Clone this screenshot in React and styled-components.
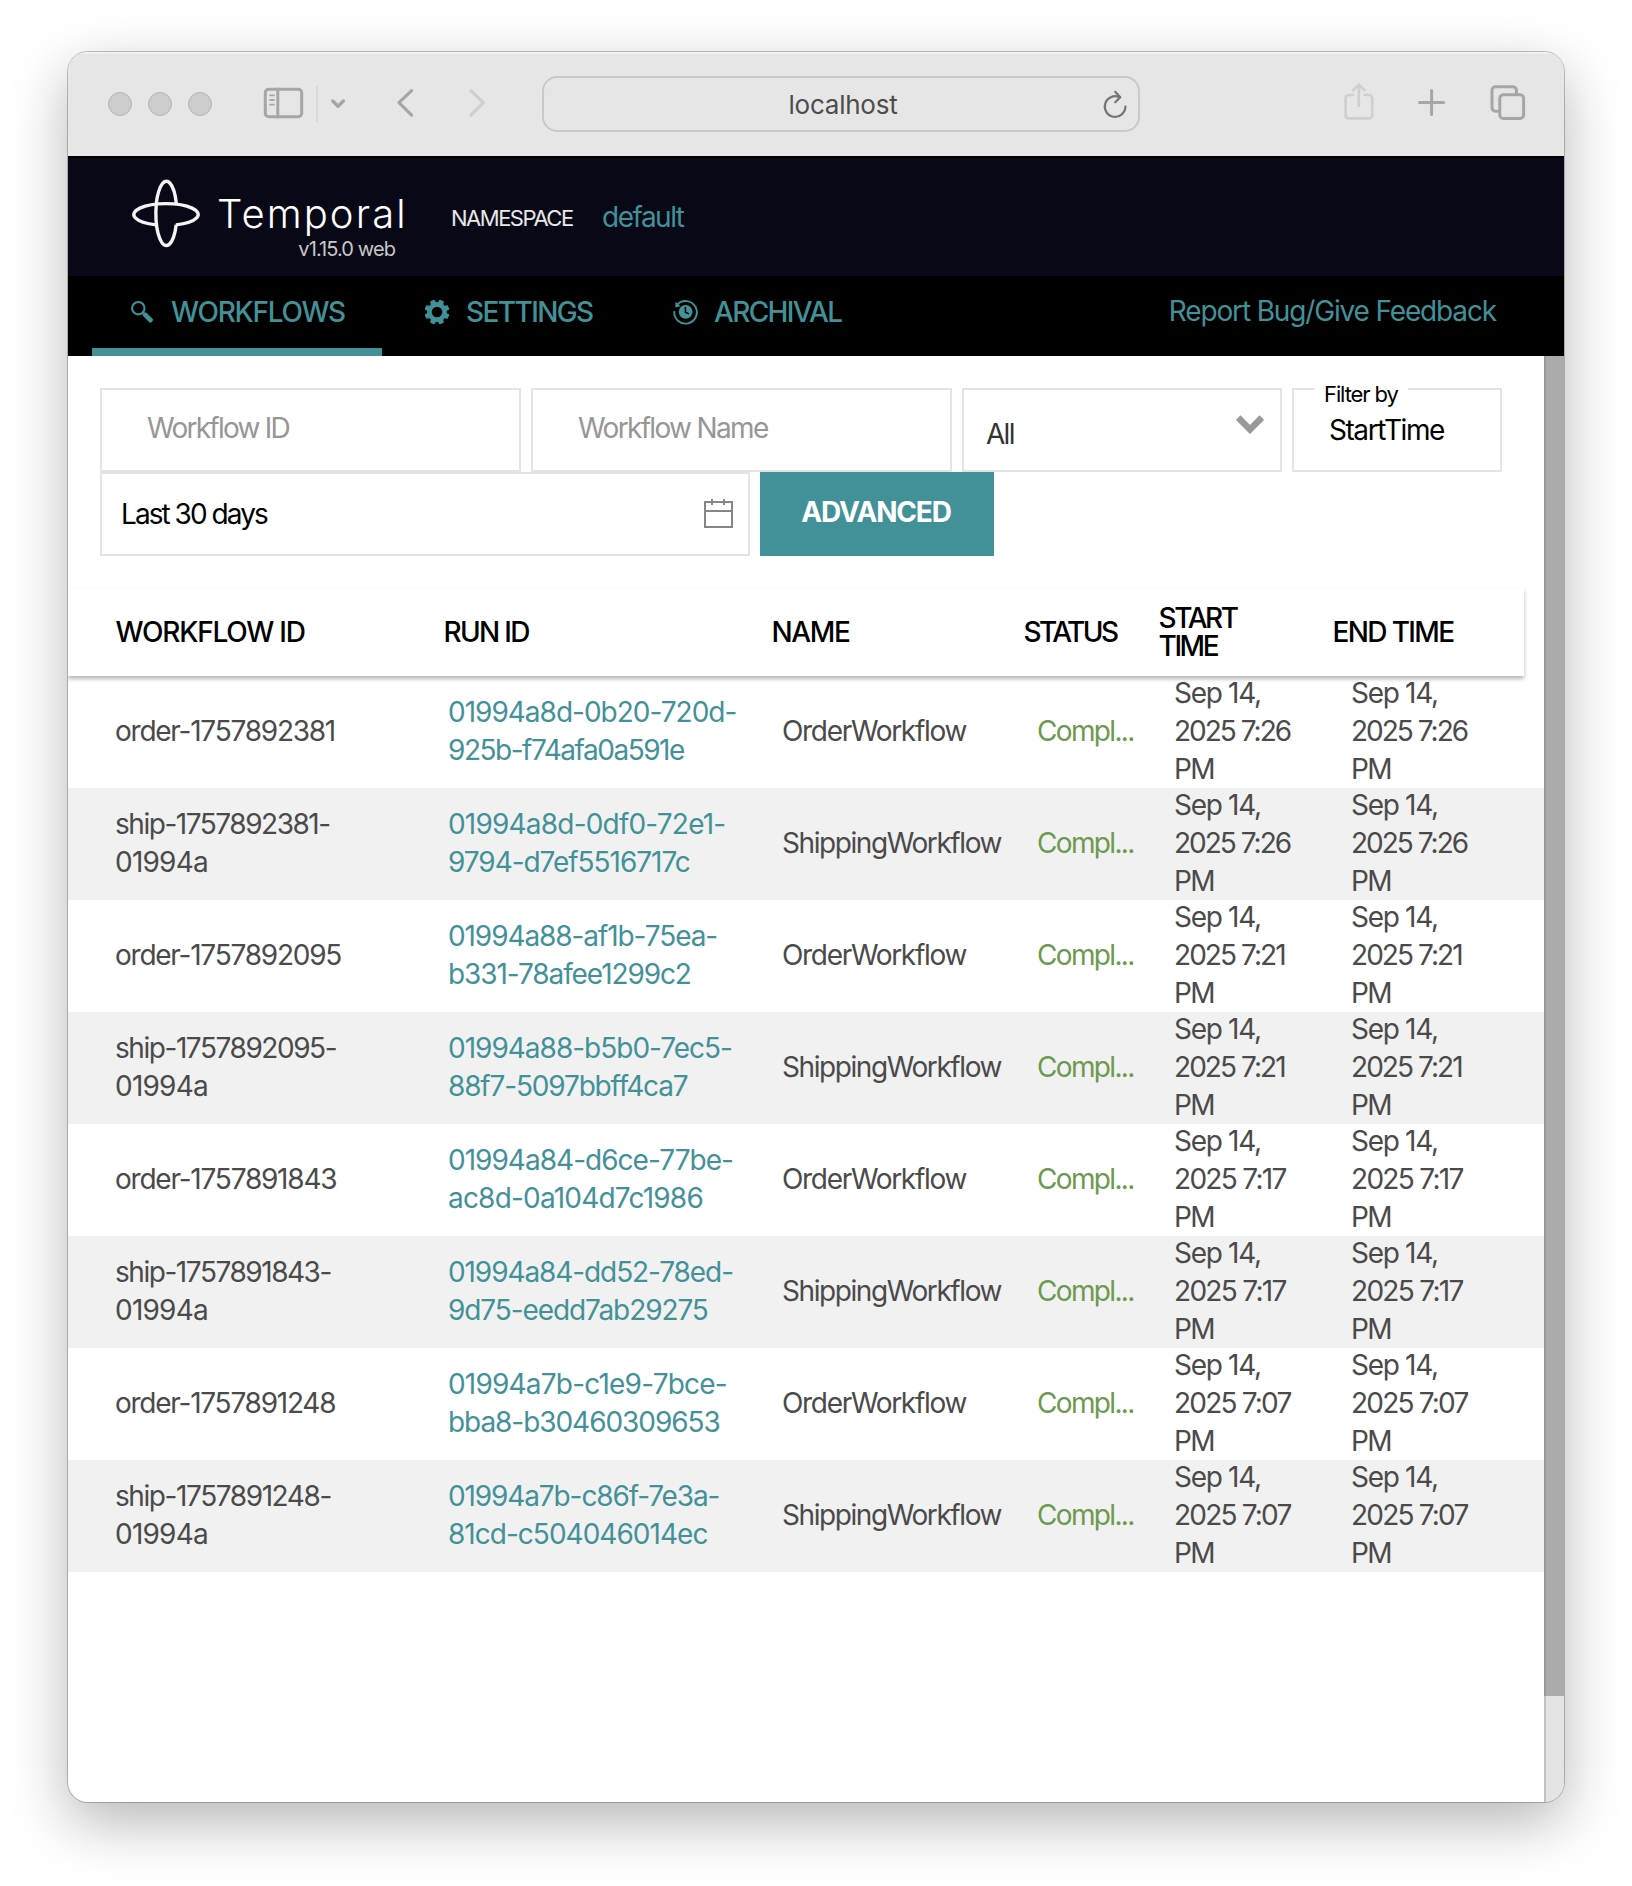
import React from 'react';
import styled, { createGlobalStyle } from 'styled-components';

const teal = '#439198';

const GlobalStyle = createGlobalStyle`
  * { box-sizing: border-box; }
  body { margin: 0; background: #fff; }
  svg { display: block; flex: none; }
`;

const Desktop = styled.div`
  width: 1632px;
  height: 1886px;
  padding: 52px 68px 84px;
  overflow: hidden;
  background: #fff;
  font-family: Inter, "Liberation Sans", sans-serif;
  font-size: 28px;
  line-height: 28px;
  white-space: nowrap;
`;

const Window = styled.div`
  display: flex;
  flex-direction: column;
  width: 1496px;
  height: 1750px;
  border-radius: 20px;
  overflow: hidden;
  background: #fff;
  box-shadow: 0 0 0 1px rgba(0, 0, 0, 0.23), 0 20px 58px rgba(0, 0, 0, 0.29);
`;

const Toolbar = styled.div`
  display: flex;
  align-items: center;
  flex: none;
  height: 104px;
  padding-left: 40px;
  background: #e6e6e6;
  box-shadow: inset 0 2px 0 #f1f1f1;
`;

const Lights = styled.div`
  display: flex;
  gap: 16px;
`;

const Light = styled.span`
  width: 24px;
  height: 24px;
  border: 1px solid #b4b4b4;
  border-radius: 50%;
  background: #cdcdcd;
`;

const ToolIcon = styled.svg`
  margin-left: ${(p) => p.$gap}px;
  fill: none;
  stroke: ${(p) => (p.$faded ? '#cfcfcf' : '#a6a6a6')};
  stroke-width: ${(p) => p.$stroke || 3};
  stroke-linecap: round;
  stroke-linejoin: round;
`;

const Divider = styled.span`
  width: 2px;
  height: 36px;
  margin-left: 11px;
  background: #d8d8d8;
`;

const AddressBar = styled.div`
  display: flex;
  align-items: center;
  width: 598px;
  height: 56px;
  margin-left: 54px;
  padding: 0 8px 0 42px;
  border: 2px solid #c9c9c9;
  border-radius: 15px;
`;

const Address = styled.span`
  flex: 1;
  padding-top: 1px;
  text-align: center;
  font-size: 26px;
  letter-spacing: -0.23px;
  color: #4c4c4c;
`;

const ReloadIcon = styled.svg`
  fill: none;
  stroke: #747474;
  stroke-width: 2.2;
  stroke-linecap: round;
  stroke-linejoin: round;
`;

const Header = styled.header`
  display: flex;
  flex: none;
  height: 120px;
  padding-left: 62px;
  border-top: 2px solid #000;
  background: #090817;
  color: #e8e8e8;
`;

const Logo = styled.svg`
  margin-top: 20px;
  fill: none;
  stroke: #f4f4f4;
  stroke-width: 3.4;
`;

const Brand = styled.div`
  width: 190px;
  margin: 36px 0 0 15px;
`;

const BrandName = styled.div`
  font-size: 40px;
  font-weight: 300;
  line-height: 40px;
  letter-spacing: 2.1px;
  color: #fff;
`;

const Version = styled.div`
  margin-top: 5px;
  padding-right: 12px;
  text-align: right;
  font-size: 20px;
  line-height: 20px;
  letter-spacing: -0.9px;
  color: #c8c8c8;
`;

const NamespaceLabel = styled.span`
  width: 151px;
  margin: 49px 0 0 44px;
  font-size: 22px;
  line-height: 22px;
  letter-spacing: -1.5px;
`;

const NamespaceName = styled.a`
  margin-top: 45px;
  letter-spacing: -1.5px;
  color: ${teal};
`;

const Nav = styled.nav`
  display: flex;
  flex: none;
  gap: 4px;
  height: 80px;
  padding-left: 24px;
  background: #000;
  color: ${teal};
`;

const Tab = styled.a`
  display: flex;
  align-items: center;
  gap: ${(p) => p.$gap || 16}px;
  width: ${(p) => p.$width}px;
  padding-left: 38px;
  border-bottom: 8px solid ${(p) => (p.$active ? teal : 'transparent')};
  font-weight: 500;
  letter-spacing: ${(p) => p.$tracking}px;
`;

const Feedback = styled.a`
  margin: 21px 68px 0 auto;
  letter-spacing: -1.15px;
`;

const Viewport = styled.div`
  display: flex;
  flex: 1;
`;

const Main = styled.main`
  width: 1476px;
`;

const Scrollbar = styled.div`
  width: 20px;
  border-left: 2px solid #c2c2c2;
  background: #e4e4e4;
`;

const Thumb = styled.div`
  height: 1340px;
  margin-left: -2px;
  border-left: 2px solid #999;
  background: #ababab;
`;

const Filters = styled.section`
  display: flex;
  flex-wrap: wrap;
  column-gap: 10px;
  padding: 32px 40px 0 32px;
`;

const Field = styled.div`
  position: relative;
  display: flex;
  align-items: center;
  justify-content: space-between;
  width: ${(p) => p.$width}px;
  height: 84px;
  padding: 0 ${(p) => p.$right || 0}px ${(p) => p.$lift || 0}px ${(p) => p.$left}px;
  border: 2px solid #e4e4e4;
  letter-spacing: ${(p) => p.$tracking}px;
  color: ${(p) => p.$color || '#000'};
`;

const SelectValue = styled.span`
  margin-top: 8px;
`;

const SelectArrow = styled.svg`
  margin-bottom: 11px;
  fill: none;
  stroke: #999;
  stroke-width: 6.4;
`;

const CalendarIcon = styled.svg`
  margin-bottom: 3px;
  fill: none;
  stroke: #868686;
  stroke-width: 2;
`;

const FieldLegend = styled.span`
  position: absolute;
  top: -7px;
  left: 21px;
  width: 93px;
  padding-left: 9px;
  background: #fff;
  font-size: 22px;
  line-height: 22px;
  letter-spacing: -1.1px;
`;

const AdvancedButton = styled.button`
  width: 234px;
  height: 84px;
  padding: 0 2px 4px 0;
  border: 0;
  background: ${teal};
  font: 700 28px/28px Inter, "Liberation Sans", sans-serif;
  letter-spacing: -1.19px;
  color: #fff;
`;

const TableHead = styled.div`
  position: relative;
  display: grid;
  grid-template-columns: 328px 328px 252px 135px 174px 1fr;
  align-items: center;
  width: 1456px;
  height: 88px;
  margin-top: 32px;
  padding-left: 47.5px;
  background: #fff;
  box-shadow: 0 3px 4px rgba(0, 0, 0, 0.28);
  font-weight: 500;
  color: #000;
`;

const HeadCell = styled.span`
  white-space: pre-line;
  letter-spacing: ${(p) => p.$tracking}px;
`;

const Row = styled.div`
  display: grid;
  grid-template-columns: 333px 334px 255px 137px 177px 1fr;
  grid-template-rows: 100%;
  align-items: center;
  height: 112px;
  padding: 0 0 3px 47px;
  background: ${(p) => (p.$shaded ? '#f1f1f1' : '#fff')};
  line-height: 38px;
  color: #4a4a4a;
`;

const Cell = styled.span`
  letter-spacing: ${(p) => p.$tracking || -1.4}px;
  color: ${(p) => p.$color || 'inherit'};
`;

const Line = styled.span`
  display: block;
  letter-spacing: ${(p) => p.$tracking}px;
`;

const rows = [
  { id: [['order-1757892381', -1.24]], run: [['01994a8d-0b20-720d-', -1.0], ['925b-f74afa0a591e', -1.48]], time: '7:26' },
  { id: [['ship-1757892381-', -1.47], ['01994a', -0.77]], run: [['01994a8d-0df0-72e1-', -0.8], ['9794-d7ef5516717c', -1.04]], time: '7:26' },
  { id: [['order-1757892095', -1.24]], run: [['01994a88-af1b-75ea-', -1.09], ['b331-78afee1299c2', -1.09]], time: '7:21' },
  { id: [['ship-1757892095-', -1.45], ['01994a', -0.77]], run: [['01994a88-b5b0-7ec5-', -1.0], ['88f7-5097bbff4ca7', -1.16]], time: '7:21' },
  { id: [['order-1757891843', -1.22]], run: [['01994a84-d6ce-77be-', -0.98], ['ac8d-0a104d7c1986', -0.8]], time: '7:17' },
  { id: [['ship-1757891843-', -1.46], ['01994a', -0.77]], run: [['01994a84-dd52-78ed-', -1.09], ['9d75-eedd7ab29275', -1.1]], time: '7:17' },
  { id: [['order-1757891248', -1.25]], run: [['01994a7b-c1e9-7bce-', -0.8], ['bba8-b30460309653', -1.06]], time: '7:07' },
  { id: [['ship-1757891248-', -1.42], ['01994a', -0.77]], run: [['01994a7b-c86f-7e3a-', -1.12], ['81cd-c504046014ec', -0.98]], time: '7:07' },
];

const timeTracking = { '7:26': -2.0, '7:21': -1.95, '7:17': -1.7, '7:07': -1.8 };

function Lines({ items }) {
  return items.map(([text, tracking]) => (
    <Line key={text} $tracking={tracking}>{text}</Line>
  ));
}

function TimeCell({ time }) {
  return (
    <Cell>
      <Lines items={[['Sep 14,', -1.3], [`2025 ${time}`, timeTracking[time]], ['PM', -1.6]]} />
    </Cell>
  );
}

function GearIcon() {
  return (
    <svg width="26" height="26" viewBox="0 0 26 26">
      <circle cx="13" cy="13" r="7.6" fill="none" stroke={teal} strokeWidth="4.6" />
      {[0, 1, 2, 3, 4, 5, 6, 7].map((n) => (
        <rect key={n} x="10.4" y="0.5" width="5.2" height="5" rx="1.2" fill={teal} transform={`rotate(${22.5 + n * 45} 13 13)`} />
      ))}
    </svg>
  );
}

function SearchIcon() {
  return (
    <svg width="26" height="26" viewBox="0 0 26 26">
      <circle cx="8.3" cy="9.2" r="6.2" fill="none" stroke={teal} strokeWidth="2.1" />
      <path d="M12 14.6 13.7 12.9 16.4 13.8 23 20.2 Q23 23.4 19.8 23.8 L13.4 17.2Z" fill={teal} />
    </svg>
  );
}

function HistoryIcon() {
  return (
    <svg width="26" height="26" viewBox="0 0 26 26">
      <path d="M4.3 5.6A11.3 11.3 0 1 1 1.3 12.2" fill="none" stroke={teal} strokeWidth="1.9" />
      <path d="M2.6 2.8 2.2 8.4 7.6 7.2Z" fill={teal} />
      <circle cx="12.6" cy="12.8" r="6.9" fill={teal} />
      <path d="M12.4 8v5.2l3.6 1.7" fill="none" stroke="#000" strokeWidth="1.5" />
    </svg>
  );
}

function BrowserBar() {
  return (
    <Toolbar>
      <Lights><Light /><Light /><Light /></Lights>
      <ToolIcon $gap={50} width="43" height="40" viewBox="262 84 43 40">
        <rect x="265.3" y="89.2" width="36.4" height="27.6" rx="3.5" />
        <path d="M277.8 89v28" />
        <path d="M270 95.3h4M270 100h4M270 104.6h4" strokeWidth="1.8" />
      </ToolIcon>
      <Divider />
      <ToolIcon $gap={10} $stroke={3.4} width="20" height="40" viewBox="328 84 20 40">
        <path d="M332.8 101 338 106.2 343.4 101" />
      </ToolIcon>
      <ToolIcon $gap={46} $stroke={3.2} width="22" height="40" viewBox="394 84 22 40">
        <path d="M411.6 90.6 399 102.7 411.6 115.2" />
      </ToolIcon>
      <ToolIcon $gap={50} $stroke={3.2} $faded width="22" height="40" viewBox="466 84 22 40">
        <path d="M470.8 90.6 483.4 102.7 470.8 115.2" />
      </ToolIcon>
      <AddressBar>
        <Address>localhost</Address>
        <ReloadIcon width="30" height="32" viewBox="1100 88 30 32">
          <path d="M1119.4 97.2A10.3 10.3 0 1 0 1125.4 106.6" />
          <path d="M1115.2 91.8 1120.3 97.2 1115.2 102.2" />
        </ReloadIcon>
      </AddressBar>
      <ToolIcon $gap={202} $stroke={2.6} $faded width="34" height="44" viewBox="1342 82 34 44">
        <path d="M1353 95h-4.4a3 3 0 0 0-3 3v17.4a3 3 0 0 0 3 3h20.6a3 3 0 0 0 3-3v-17.4a3 3 0 0 0-3-3h-4.4" />
        <path d="M1358.8 106V84.8M1353 90.4 1358.8 84.6 1364.6 90.4" />
      </ToolIcon>
      <ToolIcon $gap={40} $stroke={3} width="32" height="40" viewBox="1416 84 32 40">
        <path d="M1419.5 102.5h24.2M1431.6 90.4v24.2" />
      </ToolIcon>
      <ToolIcon $gap={40} $stroke={3} width="40" height="40" viewBox="1488 84 40 40">
        <rect x="1499.8" y="94.8" width="23.8" height="23.6" rx="3.5" />
        <path d="M1516.4 94.6v-4.4a3.4 3.4 0 0 0-3.4-3.4h-17.6a3.4 3.4 0 0 0-3.4 3.4v17.6a3.4 3.4 0 0 0 3.4 3.4h4.2" />
      </ToolIcon>
    </Toolbar>
  );
}

export default function App() {
  return (
    <Desktop>
      <GlobalStyle />
      <Window>
        <BrowserBar />
        <Header>
          <Logo width="72" height="72" viewBox="130 177.7 72 72">
            <path d="M175.9 224.6A32.2 10.9 0 1 0 156.1 224.6" />
            <path d="M176.4 203.6A10.5 32.2 0 1 0 176.2 224.4" />
          </Logo>
          <Brand>
            <BrandName>Temporal</BrandName>
            <Version>v1.15.0 web</Version>
          </Brand>
          <NamespaceLabel>NAMESPACE</NamespaceLabel>
          <NamespaceName>default</NamespaceName>
        </Header>
        <Nav>
          <Tab $active $width={290} $gap={15} $tracking={-1.3}><SearchIcon />WORKFLOWS</Tab>
          <Tab $width={245} $tracking={-1.6}><GearIcon />SETTINGS</Tab>
          <Tab $width={245} $gap={15} $tracking={-1.65}><HistoryIcon />ARCHIVAL</Tab>
          <Feedback>Report Bug/Give Feedback</Feedback>
        </Nav>
        <Viewport>
          <Main>
            <Filters>
              <Field $width={421} $left={45} $lift={4} $tracking={-1.75} $color="#969696">Workflow ID</Field>
              <Field $width={421} $left={45} $lift={4} $tracking={-1.66} $color="#969696">Workflow Name</Field>
              <Field $width={320} $left={22} $right={16} $tracking={-1.7} $color="#333">
                <SelectValue>All</SelectValue>
                <SelectArrow width="28" height="20" viewBox="0 0 28 20">
                  <path d="M2.2 2.6 14 14.4 25.8 2.6" />
                </SelectArrow>
              </Field>
              <Field $width={210} $left={35} $tracking={-1.45}>
                <FieldLegend>Filter by</FieldLegend>
                StartTime
              </Field>
              <Field $width={650} $left={19} $right={14} $tracking={-1.95}>
                Last 30 days
                <CalendarIcon width="32" height="32" viewBox="0 0 32 32">
                  <path d="M3 5h27v25H3zM3 14h27M10 2v6M22 2v6" />
                </CalendarIcon>
              </Field>
              <AdvancedButton>ADVANCED</AdvancedButton>
            </Filters>
            <TableHead>
              <HeadCell $tracking={-1.25}>WORKFLOW ID</HeadCell>
              <HeadCell $tracking={-1.7}>RUN ID</HeadCell>
              <HeadCell $tracking={-1.4}>NAME</HeadCell>
              <HeadCell $tracking={-2.6}>STATUS</HeadCell>
              <HeadCell $tracking={-2.4}>{'START\nTIME'}</HeadCell>
              <HeadCell $tracking={-1.65}>END TIME</HeadCell>
            </TableHead>
            {rows.map((row, index) => {
              const shipping = index % 2 === 1;
              return (
                <Row key={row.id[0][0]} $shaded={shipping}>
                  <Cell><Lines items={row.id} /></Cell>
                  <Cell $color={teal}><Lines items={row.run} /></Cell>
                  <Cell $tracking={shipping ? -1.42 : -1.32}>{shipping ? 'ShippingWorkflow' : 'OrderWorkflow'}</Cell>
                  <Cell $color="#6c9a4e" $tracking={-1.65}>Compl...</Cell>
                  <TimeCell time={row.time} />
                  <TimeCell time={row.time} />
                </Row>
              );
            })}
          </Main>
          <Scrollbar><Thumb /></Scrollbar>
        </Viewport>
      </Window>
    </Desktop>
  );
}
